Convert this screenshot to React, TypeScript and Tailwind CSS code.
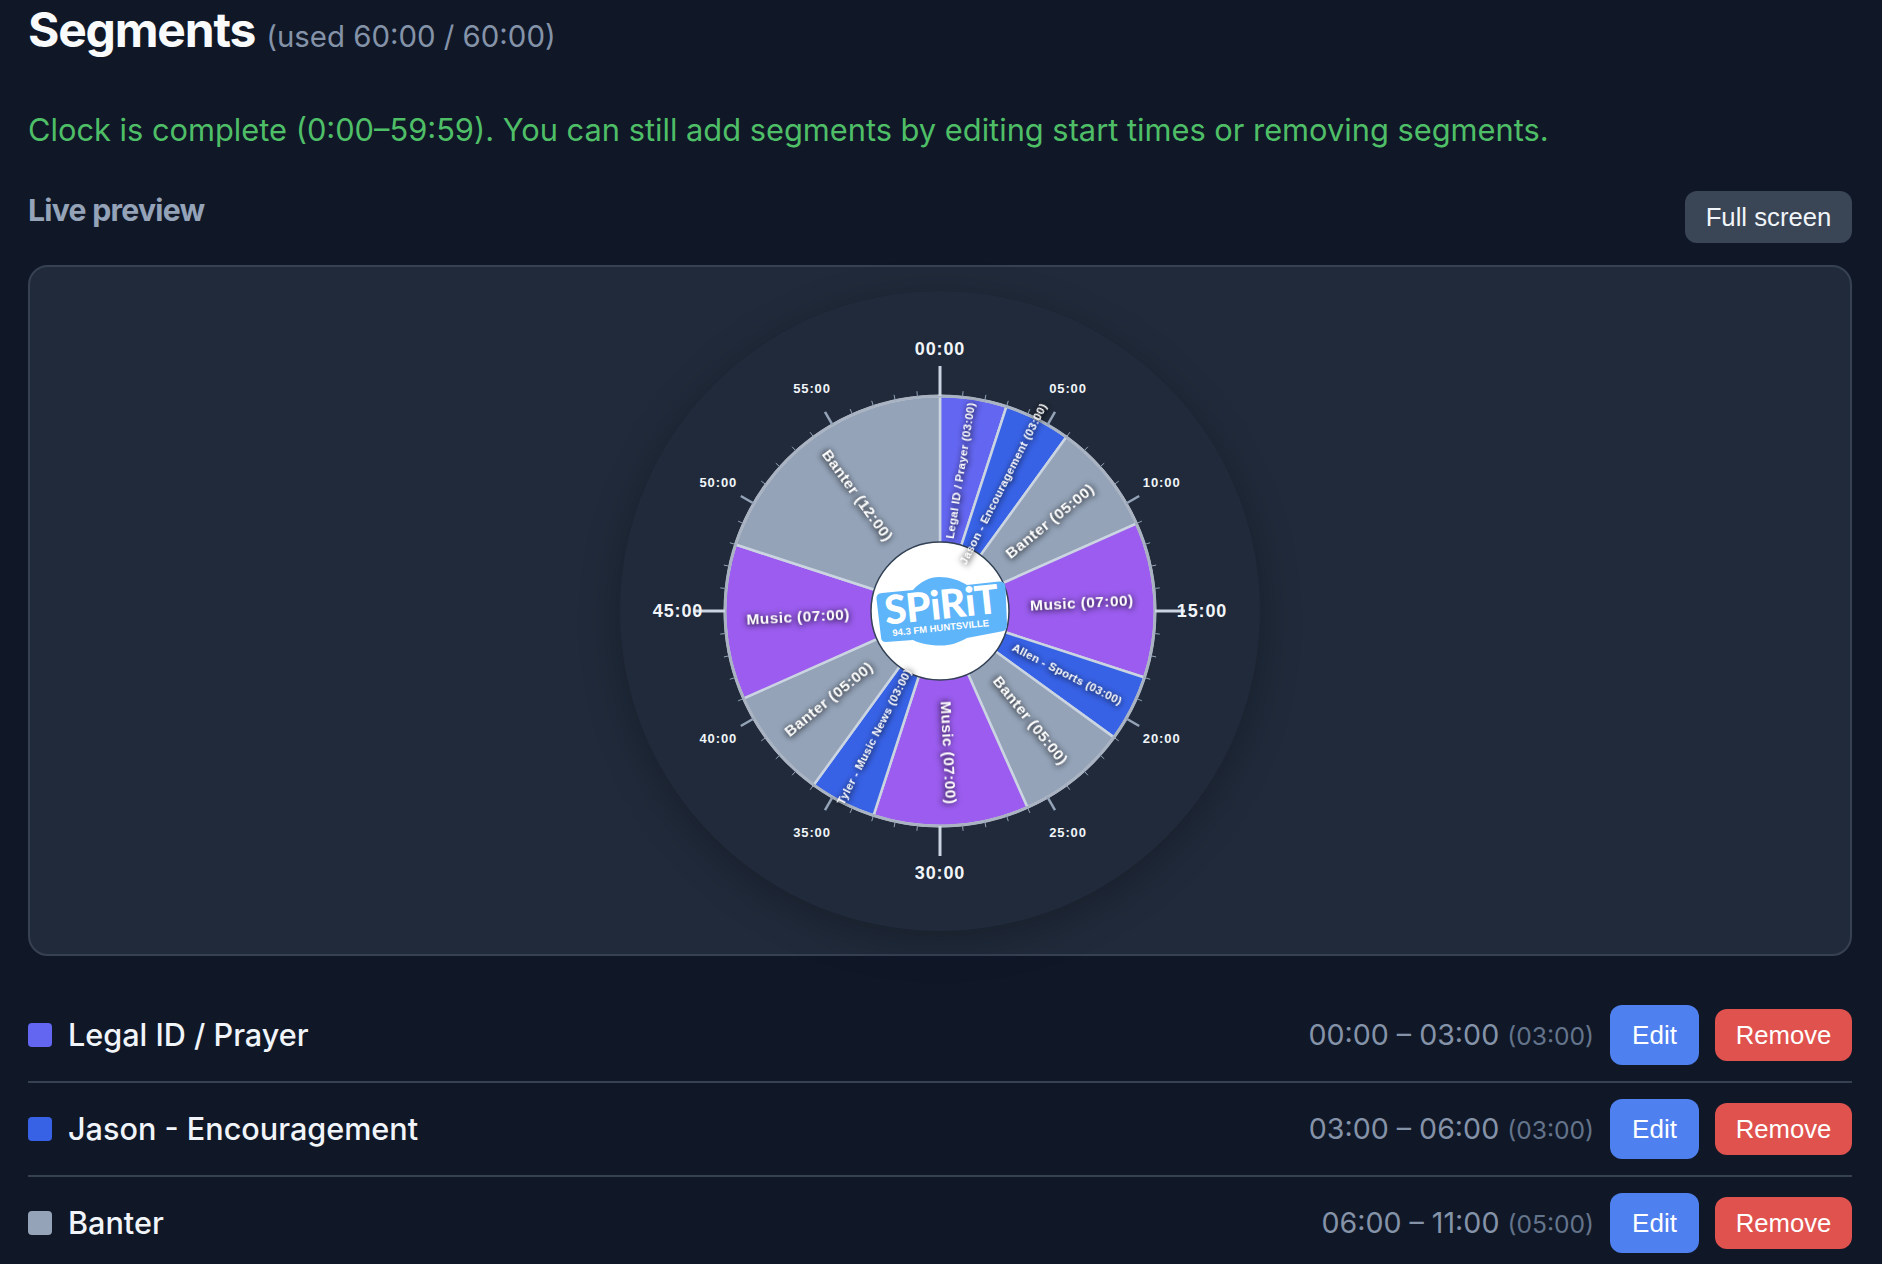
const segments = [
  { name: "Legal ID / Prayer", start: 0, len: 3, color: "#6366f1", fs: 11.5, ls: 0.3 },
  { name: "Jason - Encouragement", start: 3, len: 3, color: "#3762e6", fs: 11.5, ls: 0.3 },
  { name: "Banter", start: 6, len: 5, color: "#94a3b8", fs: 15.5, ls: 0.4 },
  { name: "Music", start: 11, len: 7, color: "#9b5cef", fs: 15.5, ls: 0.4 },
  { name: "Allen - Sports", start: 18, len: 3, color: "#3762e6", fs: 11.5, ls: 0.3 },
  { name: "Banter", start: 21, len: 5, color: "#94a3b8", fs: 15.5, ls: 0.4 },
  { name: "Music", start: 26, len: 7, color: "#9b5cef", fs: 15.5, ls: 0.4 },
  { name: "Tyler - Music News", start: 33, len: 3, color: "#3762e6", fs: 11.5, ls: 0.3 },
  { name: "Banter", start: 36, len: 5, color: "#94a3b8", fs: 15.5, ls: 0.4 },
  { name: "Music", start: 41, len: 7, color: "#9b5cef", fs: 15.5, ls: 0.4 },
  { name: "Banter", start: 48, len: 12, color: "#94a3b8", fs: 15.5, ls: 0.4 },
];

const rows = [
  { name: "Legal ID / Prayer", color: "bg-[#6366f1]", time: "00:00 – 03:00", dur: "(03:00)" },
  { name: "Jason - Encouragement", color: "bg-[#3762e6]", time: "03:00 – 06:00", dur: "(03:00)" },
  { name: "Banter", color: "bg-[#94a3b8]", time: "06:00 – 11:00", dur: "(05:00)" },
];

const C = 320;
const R = 215;
const HUB = 69;

function pt(min: number, r: number) {
  const a = (min / 60) * Math.PI * 2 - Math.PI / 2;
  return [C + r * Math.cos(a), C + r * Math.sin(a)];
}

function pad(n: number) {
  return String(n).padStart(2, "0") + ":00";
}

function Clock() {
  const ticks = Array.from({ length: 60 }, (_, i) => i);
  return (
    <svg width="640" height="640" viewBox="0 0 640 640" className="block">
      {segments.map((s, i) => {
        const [x1, y1] = pt(s.start, R);
        const [x2, y2] = pt(s.start + s.len, R);
        return (
          <path
            key={i}
            d={`M${C} ${C}L${x1} ${y1}A${R} ${R} 0 0 1 ${x2} ${y2}Z`}
            fill={s.color}
            stroke="#cbd5e1"
            strokeWidth="2.5"
          />
        );
      })}
      <circle cx={C} cy={C} r={R} fill="none" stroke="#a9b3c2" strokeWidth="3" />
      {ticks.map((i) => {
        const major = i % 15 === 0;
        const mid = i % 5 === 0;
        const [x1, y1] = pt(i, R);
        const [x2, y2] = pt(i, major ? 245 : mid ? 230 : 221);
        return (
          <line
            key={i}
            x1={x1}
            y1={y1}
            x2={x2}
            y2={y2}
            stroke={major ? "#cbd5e1" : "#94a3b8"}
            strokeWidth={major ? 3 : mid ? 2.5 : 1}
          />
        );
      })}
      {ticks
        .filter((i) => i % 5 === 0)
        .map((i) => {
          const major = i % 15 === 0;
          const [x, y] = pt(i, major ? 262 : 256);
          return (
            <text
              key={i}
              x={x}
              y={y - 0.5}
              textAnchor="middle"
              dominantBaseline="central"
              fill="#f1f5f9"
              fontFamily="'Liberation Sans', sans-serif"
              fontWeight="700"
              fontSize={major ? 18 : 13}
              letterSpacing="0.9"
            >
              {pad(i)}
            </text>
          );
        })}
      <circle cx={C} cy={C} r={HUB} fill="#fff" stroke="#334155" strokeWidth="1.5" />
      <path
        d="M262 302L293 299C301 290 310 286 319 286C330 286 339 289 347 294L379 290.5Q385 290 385.5 296L387 334Q387 340 381 340.5L347 347C338 352 330 354.5 321 354.5C311 354.5 301 353 293 349L266 351Q261 351 261 346L256.5 308Q256 302.5 262 302Z"
        fill="#5fb5f9"
      />
      <g transform="rotate(-6 321 330)">
        <text x={323} y={328} textAnchor="middle" fill="#fff" fontFamily="Lato, sans-serif" fontWeight="900" fontSize="40" letterSpacing="-0.5">
          SPiRiT
        </text>
        <text x={320} y={340} textAnchor="middle" fill="#fff" fontFamily="'Liberation Sans', sans-serif" fontWeight="700" fontSize="9.5">
          94.3 FM HUNTSVILLE
        </text>
      </g>
      {segments.map((s, i) => {
        const mid = s.start + s.len / 2;
        const deg = (mid / 60) * 360;
        const [x, y] = pt(mid, 142);
        const rot = deg <= 180 ? deg - 90 : deg + 90;
        const mm = String(s.len).padStart(2, "0");
        return (
          <text
            key={i}
            x={x}
            y={y - 1.5}
            transform={`rotate(${rot} ${x} ${y})`}
            textAnchor="middle"
            dominantBaseline="central"
            fill="#fff"
            fontFamily="'Liberation Sans', sans-serif"
            fontWeight="700"
            fontSize={s.fs}
            letterSpacing={s.ls}
            className="[filter:drop-shadow(0_1px_3px_rgba(0,0,0,1))]"
          >
            {s.name} ({mm}:00)
          </text>
        );
      })}
    </svg>
  );
}

export default function App() {
  return (
    <div className="h-[1264px] overflow-hidden bg-[#101828] pl-7 pr-[30px] font-['Inter',sans-serif]">
      <div className="flex h-[60px] items-baseline gap-[11px]">
        <h2 className="text-[48px] leading-[60px] font-bold tracking-tight text-[#f8fafc]">Segments</h2>
        <span className="text-[29.4px] text-[#8593a8]">(used 60:00 / 60:00)</span>
      </div>
      <p className="mt-[48px] text-[30.8px] leading-[44px] text-[#4fbf67]">
        Clock is complete (0:00–59:59). You can still add segments by editing start times or removing segments.
      </p>
      <div className="mt-[35px] flex items-start justify-between">
        <h3 className="text-[30.2px] leading-[46px] font-bold tracking-tight text-[#94a3b8]">Live preview</h3>
        <button className="mt-[4px] h-[52px] w-[167px] rounded-xl bg-[#3a4556] font-['Liberation_Sans',sans-serif] text-[25.7px] text-[#f1f5f9]">
          Full screen
        </button>
      </div>
      <div className="mt-[22px] flex h-[691px] items-center justify-center rounded-[20px] border-2 border-[#364152] bg-[#202a3a]">
        <div className="rounded-full bg-[#202a3a] shadow-[0_10px_40px_rgba(0,0,0,0.25)]">
          <Clock />
        </div>
      </div>
      <div className="mt-[33px]">
        {rows.map((r) => (
          <div key={r.time} className="flex items-center justify-between border-b-2 border-[#364152] py-4">
            <div className="flex items-center gap-4">
              <span className={`h-6 w-6 rounded ${r.color}`} />
              <span className="text-[30.6px] font-medium text-[#f1f5f9]">{r.name}</span>
            </div>
            <div className="flex items-center gap-4">
              <span className="text-[28.6px] text-[#8593a8]">
                {r.time} <span className="text-[24.6px] text-[#64748b]">{r.dur}</span>
              </span>
              <button className="h-[60px] w-[89px] rounded-xl bg-[#4f80ef] font-['Liberation_Sans',sans-serif] text-[26px] text-white">Edit</button>
              <button className="h-[52px] w-[137px] rounded-xl bg-[#e0524e] font-['Liberation_Sans',sans-serif] text-[25.7px] text-white">Remove</button>
            </div>
          </div>
        ))}
      </div>
    </div>
  );
}
